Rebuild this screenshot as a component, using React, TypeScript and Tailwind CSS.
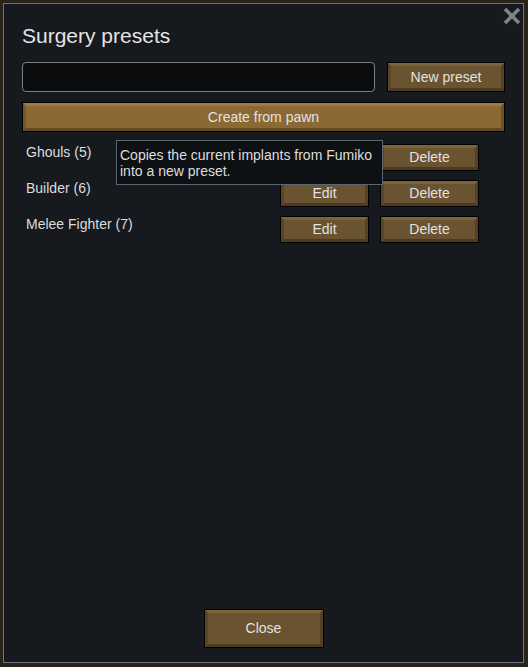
import React from "react";

const font = { fontFamily: '"Liberation Sans", Arial, sans-serif' };

type BtnProps = { label: string; className?: string; hover?: boolean };

const GameButton = ({ label, className = "", hover = false }: BtnProps) => {
  const skin = hover
    ? "bg-[#8a6934] border-t-[#9c7b44] border-l-[#76592b] border-r-[#6f5328] border-b-[#634a23]"
    : "bg-[#6a5330] border-t-[#7c633a] border-l-[#5a4627] border-r-[#554224] border-b-[#4c3b20]";
  return (
    <div className={`border border-black ${className}`}>
      <div
        className={`w-full h-full flex items-center justify-center border-[3px] text-[14px] text-[#e2e2e2] ${skin}`}
      >
        {label}
      </div>
    </div>
  );
};

const presets = [
  { name: "Ghouls", count: 5 },
  { name: "Builder", count: 6 },
  { name: "Melee Fighter", count: 7 },
];

export default function App() {
  return (
    <div className="w-[528px] h-[667px] bg-[#2a2319] p-[3px]" style={font}>
      <div className="relative w-[521px] h-[660px] border border-[#6b7480] bg-[#161a1f] flex flex-col px-[18px] pt-[20px] text-[#dedede]">
        {/* close X */}
        <svg
          className="absolute right-[2px] top-[3px] w-[18px] h-[18px]"
          viewBox="0 0 18 18"
        >
          <path d="M2 2 L16 16 M16 2 L2 16" stroke="#808489" strokeWidth="3.6" />
        </svg>

        <h1 className="text-[21px] leading-[24px] text-[#e4e4e4]">Surgery presets</h1>

        <div className="mt-[14px] flex gap-[12px] h-[30px]">
          <div className="w-[353px] h-full bg-[#0b0c0e] border border-[#7c7f83] rounded-[4px]" />
          <GameButton label="New preset" className="w-[118px] h-full" />
        </div>

        <GameButton label="Create from pawn" hover className="mt-[10px] h-[30px]" />

        <div className="mt-[12px] flex flex-col">
          {presets.map((p, i) => (
            <div key={p.name} className="h-[36px] flex items-start pl-[4px] pr-[26px]">
              <span className="text-[14px] leading-[16px] text-[#dcdcdc]">
                {p.name} ({p.count})
              </span>
              {/* first row's Edit sits under the tooltip */}
              <GameButton label={i === 0 ? "" : "Edit"} className="ml-auto w-[89px] h-[27px]" />
              <GameButton label="Delete" className="ml-[11px] w-[99px] h-[27px]" />
            </div>
          ))}
        </div>

        {/* tooltip */}
        <div className="absolute left-[112px] top-[136px] w-[267px] bg-[#0e1114] border border-[#5c6670] pl-[3px] pt-[6px] pb-[5px] text-[14px] leading-[16px] text-[#dedede]">
          Copies the current implants from Fumiko
          <br />
          into a new preset.
        </div>

        <GameButton label="Close" className="mt-auto mb-[14px] self-center w-[120px] h-[39px]" />
      </div>
    </div>
  );
}
